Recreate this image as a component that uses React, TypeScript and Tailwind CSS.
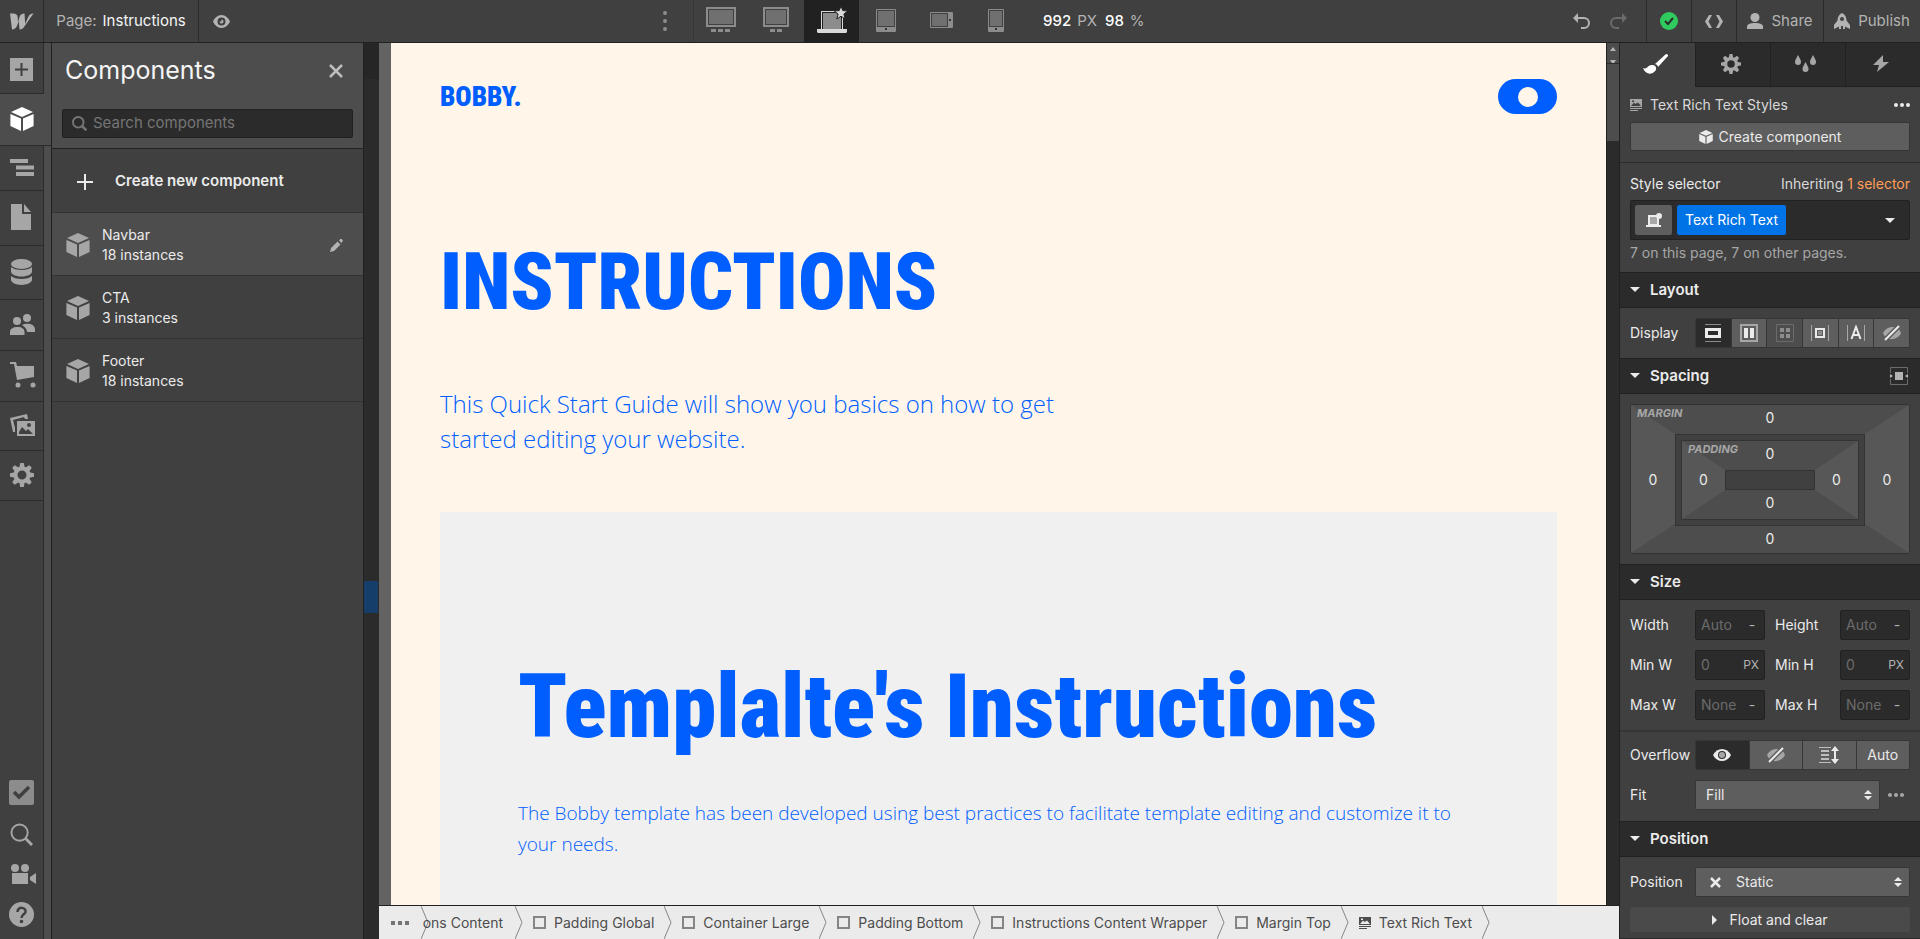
import type { ReactNode } from 'react'
import clsx from 'clsx'

// ── Shared styles ─────────────────────────────────────────────

const displayFont = "font-['Roboto_Condensed','Liberation_Sans_Narrow',sans-serif] font-black"
const bodyFont = "font-['Open_Sans','Noto_Sans',sans-serif] font-[350]"
const labelCls = 'w-[65px] shrink-0 text-[#ebebeb]'
const segmentCls = 'flex flex-1 items-center justify-center border-l border-[#363636] first:border-l-0'

// ── Icons ─────────────────────────────────────────────────────

function Svg({ w, h, box, children, className }: { w: number; h: number; box?: string; children: ReactNode; className?: string }) {
  return (
    <svg width={w} height={h} viewBox={box ?? `0 0 ${w} ${h}`} fill="currentColor" className={clsx('shrink-0', className)} aria-hidden="true">
      {children}
    </svg>
  )
}

function Cube({ size = 24, className }: { size?: number; className?: string }) {
  return (
    <Svg w={size} h={size} box="0 0 24 24" className={className}>
      <path d="M12 0 23 5 12 10 1 5ZM.4 7 11 11.6V24L.4 19ZM23.6 7 13 11.6V24l10.6-5Z" />
    </Svg>
  )
}

function Search({ size, stroke = 2 }: { size: number; stroke?: number }) {
  return (
    <Svg w={size} h={size} box="0 0 24 24">
      <circle cx="10" cy="10" r="8.5" fill="none" stroke="currentColor" strokeWidth={stroke} />
      <path d="m16 16 7 7" stroke="currentColor" strokeWidth={stroke + 1} />
    </Svg>
  )
}

function Gear({ size }: { size: number }) {
  return (
    <Svg w={size} h={size} box="0 0 24 24">
      <circle cx="12" cy="12" r="6.5" fill="none" stroke="currentColor" strokeWidth="4" />
      {[0, 45, 90, 135, 180, 225, 270, 315].map(a => (
        <path key={a} d="m10.2 0h3.6l1 5h-5.6z" transform={`rotate(${a} 12 12)`} />
      ))}
    </Svg>
  )
}

const Plus = () => (
  <Svg w={16} h={16}><path d="M7 0h2v7h7v2H9v7H7V9H0V7h7z" /></Svg>
)

const Caret = () => (
  <Svg w={10} h={5}><path d="M0 0h10L5 5z" /></Svg>
)

const UpDown = () => (
  <Svg w={8} h={10}><path d="M4 0l4 4H0zM4 10 0 6h8z" /></Svg>
)

const Dots = () => (
  <Svg w={16} h={4}><circle cx="2" cy="2" r="2" /><circle cx="8" cy="2" r="2" /><circle cx="14" cy="2" r="2" /></Svg>
)

const EyeOff = () => (
  <Svg w={18} h={16} className="text-[#a6a6a6]">
    <path d="M0 8c3-7 13-8 16.5-3L18 8c-3 7-13 8-16.5 3z" />
    <path d="m2 15 14-14" stroke="#5e5e5e" strokeWidth="5" />
    <path d="m2 15 14-14" stroke="#ebebeb" strokeWidth="2" />
  </Svg>
)

const RichText = () => (
  <Svg w={12} h={12}>
    <path fillRule="evenodd" d="M0 0h12v8H0zm1 7h10L8 3.500 5.500 5 4 3.500zM2 1.500v1.500h2V1.500z" />
    <path d="M0 9h12v1H0zM0 11h8v1H0z" />
  </Svg>
)

const Chevron = () => (
  <Svg w={8} h={33}><path d="M0 0l7 16.500L0 33" fill="none" stroke="#858585" /></Svg>
)

// ── Top bar ───────────────────────────────────────────────────

const breakpoints = [
  { name: 'Extra large', width: 'w-[54px]', icon: (
    <Svg w={30} h={26}><path d="M0 0h30v20H0z" /><path d="M2 2h26v16H2z" fill="#404040" /><path d="M3 3h24v14H3z" fill="#707070" /><path d="M5 22h5v3H5zM12 22h5v3h-5zM19 22h5v3h-5z" /></Svg>
  ) },
  { name: 'Large', width: 'w-[56px]', icon: (
    <Svg w={26} h={26}><path d="M0 0h26v20H0z" /><path d="M2 2h22v16H2z" fill="#404040" /><path d="M3 3h20v14H3z" fill="#707070" /><path d="M7 22h5v3H7zM14 22h5v3h-5z" /></Svg>
  ) },
  { name: 'Desktop', width: 'w-[55px]', active: true, icon: (
    <Svg w={30} h={28}>
      <path d="M4 5h22v20H4z" /><path d="M5 6h20v18H5z" fill="#212121" /><path d="M6 7h18v16H6z" fill="#8c8c8c" /><path d="M0 23h30v3l-1 1H1l-1-1z" />
      <path d="m24 0 1.800 4.600 5 .3-3.900 3.100L28.200 13 24 10.200 19.800 13l1.300-5-3.900-3.100 5-.3z" stroke="#212121" />
    </Svg>
  ) },
  { name: 'Tablet', width: 'w-[54px]', icon: (
    <Svg w={20} h={23}><rect width="20" height="23" rx="1" /><path d="M1 1h18v17H1z" fill="#404040" /><path d="M2 2h16v15H2z" fill="#707070" /><path d="M9 19h2v2H9z" fill="#333" /></Svg>
  ) },
  { name: 'Mobile landscape', width: 'w-[56px]', icon: (
    <Svg w={23} h={16}><rect width="23" height="16" rx="1" /><path d="M1 1h17v14H1z" fill="#404040" /><path d="M2 2h15v12H2z" fill="#707070" /><path d="M19 7h2v2h-2z" fill="#333" /></Svg>
  ) },
  { name: 'Mobile portrait', width: 'w-[54px]', icon: (
    <Svg w={16} h={23}><rect width="16" height="23" rx="1" /><path d="M1 1h14v17H1z" fill="#404040" /><path d="M2 2h12v15H2z" fill="#707070" /><path d="M7 19h2v2H7z" fill="#333" /></Svg>
  ) },
]

function TopBar() {
  const cell = 'flex h-full items-center justify-center border-l border-[#2b2b2b]'
  return (
    <header className="flex h-[43px] shrink-0 items-center border-b border-[#212121] bg-[#404040] text-[#b3b3b3]">
      <button aria-label="Webflow menu" className="flex h-full w-[43px] items-center justify-center">
        <Svg w={24} h={17}>
          <path d="M18 4.500 15.200 10.800 14.500.5C11.500.5 10.300 2 9.500 4L8 9.500 7.700 4C7.500 1.800 5.800.5 3.500.5H0L2 16.500c2.800 0 4.300-1.900 5-3.800L8.800 8.500 9.500 16.500c2.800 0 4.200-1.500 5-3.300L23.500.5C20.500.5 19 2 18 4.500z" />
        </Svg>
      </button>
      <div className={clsx(cell, 'w-[155px] gap-1.5 text-[15px]')}>
        <span>Page:</span>
        <span className="text-[#f5f5f5]">Instructions</span>
      </div>
      <button aria-label="Preview" className={clsx(cell, 'w-[45px]')}>
        <Svg w={17} h={13}>
          <path fillRule="evenodd" d="M8.500 0C4.500 0 1.500 3 0 6.500 1.500 10 4.500 13 8.500 13S15.500 10 17 6.500C15.500 3 12.500 0 8.500 0zm0 2.500a4 4 0 1 0 0 8 4 4 0 0 0 0-8zm0 2a2 2 0 1 1-2 2l2 0z" />
        </Svg>
      </button>
      <div className="flex h-full flex-1 items-center pl-[394px]">
        <button aria-label="More breakpoints" className="flex h-full w-[56px] items-center justify-center text-[#8c8c8c]">
          <Svg w={4} h={20}><circle cx="2" cy="2" r="2" /><circle cx="2" cy="10" r="2" /><circle cx="2" cy="18" r="2" /></Svg>
        </button>
        <div className="flex h-full border-l border-[#363636]">
          {breakpoints.map(b => (
            <button key={b.name} aria-label={b.name} className={clsx('flex items-center justify-center pb-0.5', b.width, b.active ? 'bg-[#212121] text-[#d9d9d9]' : 'text-[#8c8c8c]')}>
              {b.icon}
            </button>
          ))}
        </div>
        <div className="flex gap-1.5 pl-5 text-[15px]">
          <span className="font-medium text-white">992</span>
          <span>PX</span>
          <span className="pl-0.5 font-medium text-white">98</span>
          <span>%</span>
        </div>
      </div>
      <button aria-label="Undo" className="flex h-full w-9 items-center justify-center">
        <Svg w={18} h={16}><path d="M3 5h8a5 5 0 0 1 0 10H8" fill="none" stroke="currentColor" strokeWidth="2" /><path d="M0 5 5 0v10z" /></Svg>
      </button>
      <button aria-label="Redo" className="mr-2.5 flex h-full w-9 items-center justify-center text-[#6b6b6b]">
        <Svg w={18} h={16}><path d="M15 5H7a5 5 0 0 0 0 10h3" fill="none" stroke="currentColor" strokeWidth="2" /><path d="m18 5-5-5v10z" /></Svg>
      </button>
      <button aria-label="Saved" className={clsx(cell, 'w-[45px] text-[#2fcb5e]')}>
        <Svg w={18} h={18}><circle cx="9" cy="9" r="9" /><path d="m5 9 3 3 5-6" fill="none" stroke="#2b2b2b" strokeWidth="2" /></Svg>
      </button>
      <button aria-label="Export code" className={clsx(cell, 'w-[45px]')}>
        <Svg w={18} h={13}><path d="M7 0 3.500 6.500 7 13H4L0 6.500 4 0zM11 0l3.500 6.500L11 13h3L18 6.500 14 0z" /></Svg>
      </button>
      <button className={clsx(cell, 'w-[87px] gap-2 text-[15px]')}>
        <Svg w={16} h={16}><circle cx="8" cy="4.500" r="4.500" /><path d="M0 16v-2c0-3 3-4 8-4s8 1 8 4v2z" /></Svg>
        Share
      </button>
      <button className={clsx(cell, 'w-[97px] gap-2 text-[15px]')}>
        <Svg w={16} h={16}>
          <path fillRule="evenodd" d="M8 0c3 1.500 4.500 4 4.500 7.500L16 12v4l-5-2.500V16H9v-3H7v3H5v-2.500L0 16v-4l3.500-4.500C3.500 4 5 1.500 8 0zm0 4a2 2 0 1 0 0 4 2 2 0 0 0 0-4z" />
        </Svg>
        Publish
      </button>
    </header>
  )
}

// ── Left rail ─────────────────────────────────────────────────

const railItems = [
  { name: 'Add', height: 'h-[51px]', icon: <Svg w={23} h={23}><path fillRule="evenodd" d="M0 0h23v23H0zm10.500 5v5.500H5v2h5.500V18h2v-5.500H18v-2h-5.500V5z" /></Svg> },
  { name: 'Components', height: 'h-[52px]', active: true, icon: <Cube /> },
  { name: 'Navigator', height: 'h-[45px]', icon: <Svg w={24} h={17}><path d="M0 0h18v4H0zM6 6.500h18v4H6zM6 13h18v4H6z" /></Svg> },
  { name: 'Pages', height: 'h-[55px]', icon: <Svg w={22} h={26}><path d="M1 0h11v10h9v16H1z" /><path d="M14 0l7 8h-7z" /></Svg> },
  { name: 'CMS', height: 'h-[54px]', icon: (
    <Svg w={22} h={26}>
      <ellipse cx="11.500" cy="5" rx="10.500" ry="5" />
      <path d="M1 8c4 4 17 4 21 0v5c-2 6-19 6-21 0zM1 17c4 4 17 4 21 0v4c-2 6.500-19 6.500-21 0z" />
    </Svg>
  ) },
  { name: 'Users', height: 'h-[51px]', icon: (
    <Svg w={25} h={21}>
      <circle cx="7" cy="7" r="4" /><circle cx="17" cy="4" r="4" />
      <path d="M0 21v-3c0-3 3-5 7.500-5s7 2 7 5v3zM12 11c4-2 13-2 13 5v2h-8c0-3-2-5-5-7z" />
    </Svg>
  ) },
  { name: 'Ecommerce', height: 'h-[51px]', icon: (
    <Svg w={26} h={26}><path d="M0 0h6l1 4h17v11L7 18 4 2H0z" /><circle cx="8" cy="23" r="2.500" /><circle cx="23" cy="23" r="2.500" /></Svg>
  ) },
  { name: 'Assets', height: 'h-[49px]', icon: (
    <Svg w={26} h={23}>
      <path d="M0 4 17 0l1 5h-3l-1-2L3 6l2 8v4H3z" />
      <path fillRule="evenodd" d="M7 7h18v15H7zm2 11v2h14l-5-5-2 2-4-4zm10-9a2 2 0 1 0 0 4 2 2 0 0 0 0-4z" />
    </Svg>
  ) },
  { name: 'Settings', height: 'h-[50px]', icon: <Gear size={24} /> },
]

function Rail() {
  return (
    <nav className="flex w-[51px] shrink-0 flex-col justify-between bg-[linear-gradient(to_right,#404040_43px,#2b2b2b_43px,#2b2b2b_44px,#4d4d4d_44px)] text-[#a6a6a6]">
      <div className="flex flex-col">
        {railItems.map(i => (
          <button
            key={i.name}
            aria-label={i.name}
            className={clsx('flex items-center border-b border-[#2b2b2b] pb-0.5 pl-2.5 first:pt-1', i.height, i.active ? 'w-full bg-[#4d4d4d] text-white' : 'w-[43px]')}
          >
            {i.icon}
          </button>
        ))}
      </div>
      <div className="flex w-[43px] flex-col items-center gap-[18px] pb-3">
        <button aria-label="Audit">
          <Svg w={25} h={25}><rect width="25" height="25" rx="2" fill="#8c8c8c" /><path d="m5 12 5 5 10-10" fill="none" stroke="#404040" strokeWidth="3.500" /></Svg>
        </button>
        <button aria-label="Quick find"><Search size={23} /></button>
        <button aria-label="Video tutorials" className="pl-1">
          <Svg w={25} h={20}><circle cx="4" cy="4" r="4" /><circle cx="14" cy="4" r="4" /><path d="M1 9h16v11H1zM19 13l6-4v11l-6-4z" /></Svg>
        </button>
        <button aria-label="Help">
          <Svg w={25} h={25}>
            <circle cx="12.500" cy="12.500" r="12.500" />
            <path d="M8.500 10c0-6 9-5 8 0-.5 2.500-4 2.500-4 6" fill="none" stroke="#404040" strokeWidth="2.500" /><circle cx="12.500" cy="19.500" r="1.800" fill="#404040" />
          </Svg>
        </button>
      </div>
    </nav>
  )
}

// ── Components panel ──────────────────────────────────────────

const components = [
  { name: 'Navbar', count: '18 instances', hovered: true },
  { name: 'CTA', count: '3 instances' },
  { name: 'Footer', count: '18 instances' },
]

function ComponentsPanel() {
  return (
    <aside className="flex w-[313px] shrink-0 flex-col border-x border-[#212121] bg-[#404040] text-[#ebebeb]">
      <div className="border-b border-[#212121] bg-[#4d4d4d] px-2.5 pb-2.5">
        <div className="flex h-[66px] items-start justify-between pt-[11px]">
          <h2 className="pl-[3px] text-[25px] leading-8 text-[#f5f5f5]">Components</h2>
          <button aria-label="Close" className="p-2.5 text-[#bdbdbd]">
            <Svg w={14} h={14}><path d="m1 1 12 12M13 1 1 13" stroke="currentColor" strokeWidth="2.500" /></Svg>
          </button>
        </div>
        <label className="flex h-[29px] items-center gap-1.5 rounded-xs border border-[#212121] bg-[#2b2b2b] px-[9px] text-[#757575]">
          <Search size={15} stroke={3} />
          <input type="text" aria-label="Search components" placeholder="Search components" className="w-full text-[15px] outline-none placeholder:text-[#757575]" />
        </label>
      </div>
      <button className="flex h-16 items-center gap-[22px] border-b border-[#333] pt-0.5 pl-[25px] text-[15px] font-semibold">
        <Plus />
        Create new component
      </button>
      <ul>
        {components.map(c => (
          <li key={c.name} className={clsx('flex h-[63px] items-center border-b border-[#333] pt-0.5 pr-5 pl-3.5', c.hovered && 'bg-[#4d4d4d]')}>
            <Cube className="text-[#a6a6a6]" />
            <div className="flex-1 pl-3 text-sm leading-5">
              <div>{c.name}</div>
              <div>{c.count}</div>
            </div>
            {c.hovered && (
              <button aria-label="Edit component" className="text-[#b3b3b3]">
                <Svg w={13} h={13}><path d="M0 13l1-4 6.500-6.500 3 3L4 12zM9 1.500l1-1a1 1 0 0 1 2 0l1 1-1.500 2.500z" /></Svg>
              </button>
            )}
          </li>
        ))}
      </ul>
    </aside>
  )
}

// ── Canvas ────────────────────────────────────────────────────

const crumbs = ['Padding Global', 'Container Large', 'Padding Bottom', 'Instructions Content Wrapper', 'Margin Top']

function Canvas() {
  return (
    <main className="flex min-w-0 flex-1 flex-col">
      <div className="flex min-h-0 flex-1">
        <div className="w-3 shrink-0 bg-[#636363]" />
        <div className="flex-1 overflow-hidden bg-[#fff6e9] px-[49px] text-[#005eff]">
          <div className="flex h-[107px] items-center justify-between">
            <a href="#" className={clsx(displayFont, 'text-[27px] leading-10')}>BOBBY.</a>
            <button aria-label="Toggle menu" className="flex h-[35px] w-[59px] items-center justify-center rounded-full bg-[#005eff]">
              <span className="size-5 rounded-full bg-[#fff6e9]" />
            </button>
          </div>
          <h1 className={clsx(displayFont, 'pt-[82px] text-[79px] leading-[100px]')}>INSTRUCTIONS</h1>
          <p className={clsx(bodyFont, 'w-[640px] pt-[54px] text-[24px] leading-[35px]')}>
            This Quick Start Guide will show you basics on how to get started editing your website.
          </p>
          <section className="mt-14 h-[500px] bg-[#f0f0f0] px-[78px] pt-[140px]">
            <h2 className={clsx(displayFont, 'text-[89px] leading-[110px] whitespace-nowrap')}>Templalte's Instructions</h2>
            <p className={clsx(bodyFont, 'pt-[36px] text-[19px] leading-[31px]')}>
              The Bobby template has been developed using best practices to facilitate template editing and customize it to your needs.
            </p>
          </section>
        </div>
        <div className="flex w-[13px] shrink-0 flex-col border-l border-[#212121] bg-[#2b2b2b]">
          <div className="flex h-5 flex-col items-center justify-between bg-[#4d4d4d] pt-1 text-[#b3b3b3]">
            <Svg w={6} h={4}><path d="M3 0l3 4H0z" /></Svg>
            <Svg w={6} h={3}><path d="M0 0h6L4 3H2z" /></Svg>
          </div>
          <div className="mt-px h-[77px] bg-[#4d4d4d]" />
        </div>
      </div>
      <nav aria-label="Breadcrumbs" className="flex h-[34px] shrink-0 items-center border-t border-[#212121] bg-[#ebebeb] text-sm whitespace-nowrap text-[#4d4d4d]">
        <button aria-label="More ancestors" className="w-[42px] pl-3">
          <Svg w={19} h={4}><path d="M0 0h4v4H0zM7 0h4v4H7zM14 0h4v4h-4z" fill="#757575" /></Svg>
        </button>
        <Chevron />
        <button className="flex w-[86px] justify-end pr-3">ons Content</button>
        <Chevron />
        {crumbs.map(c => (
          <span key={c} className="flex items-center">
            <button className="flex items-center gap-2 px-2.5">
              <span className="size-[13px] border-2 border-[#858585]" />
              {c}
            </button>
            <Chevron />
          </span>
        ))}
        <button className="flex items-center gap-2 px-2.5"><RichText />Text Rich Text</button>
        <Chevron />
      </nav>
    </main>
  )
}

// ── Style panel ───────────────────────────────────────────────

function SectionHead({ title, children }: { title: string; children?: ReactNode }) {
  return (
    <div className="flex h-9 shrink-0 items-center justify-between border-y border-[#212121] bg-[#2b2b2b] pr-3 pl-2.5 text-[#ebebeb]">
      <button className="flex items-center gap-2.5 text-[15px] font-semibold"><Caret />{title}</button>
      {children}
    </div>
  )
}

function SizeField({ id, label, placeholder, unit }: { id: string; label: string; placeholder: string; unit: string }) {
  return (
    <div className="flex flex-1 items-center">
      <label htmlFor={id} className={labelCls}>{label}</label>
      <div className="flex h-[30px] min-w-0 flex-1 items-center rounded-xs border border-[#212121] bg-[#2b2b2b] px-[5px]">
        <input id={id} type="text" placeholder={placeholder} className="w-full min-w-0 outline-none placeholder:text-[#6b6b6b]" />
        <button className={clsx('text-[#b3b3b3]', unit === 'PX' ? 'text-xs' : 'w-3.5 shrink-0')}>{unit}</button>
      </div>
    </div>
  )
}

const displayOptions = [
  { name: 'Block', active: true, icon: <Svg w={16} h={18}><path d="M0 0h16v1H0zM0 17h16v1H0z" fill="#8c8c8c" /><path d="M1.500 5.500h13v7h-13z" fill="none" stroke="currentColor" strokeWidth="3" /></Svg> },
  { name: 'Flex', icon: <Svg w={18} h={18}><path d="M1 1h16v16H1z" fill="none" stroke="#a6a6a6" strokeWidth="2" /><path d="M4 4h4v10H4zM10 4h4v10h-4z" /></Svg> },
  { name: 'Grid', dim: true, icon: <Svg w={18} h={18}><path d="M.5.5h17v17H.5z" fill="none" stroke="#6b6b6b" /><path d="M4 4h4v4H4zM10 4h4v4h-4zM4 10h4v4H4zM10 10h4v4h-4z" fill="#8c8c8c" /></Svg> },
  { name: 'Inline block', icon: <Svg w={18} h={16}><path d="M0 0h1v16H0zM17 0h1v16h-1z" fill="#a6a6a6" /><path d="M5 4h8v8H5z" fill="none" stroke="currentColor" strokeWidth="2" /><path d="M7 6h4v4H7z" fill="#8c8c8c" /></Svg> },
  { name: 'Inline', icon: <Svg w={18} h={16}><path d="M0 0h1v16H0zM17 0h1v16h-1z" fill="#a6a6a6" /><path d="M4.500 14 9 2l4.500 12M6 10h6" fill="none" stroke="currentColor" strokeWidth="2" /></Svg> },
  { name: 'None', icon: <EyeOff /> },
]

function SpacingBox() {
  const value = 'relative flex items-center justify-center pb-1 hover:text-white'
  const side = 'relative row-start-2 flex items-center justify-center hover:text-white'
  const caption = 'absolute top-0.5 left-1.5 text-[11px] leading-3 font-bold text-[#a6a6a6] italic'
  return (
    <div className="relative grid h-[150px] grid-cols-[44px_1fr_44px] grid-rows-[29px_1fr_29px] rounded-xs border border-[#333] text-[#ebebeb]">
      <div className="absolute inset-0 border-x-[44px] border-y-[29px] border-x-[#575757] border-y-[#4d4d4d]" />
      <span className={caption}>MARGIN</span>
      <button className={clsx(value, 'col-start-2')}>0</button>
      <button className={clsx(side, 'col-start-1')}>0</button>
      <div className="relative col-start-2 row-start-2 border border-[#333] bg-[#404040] p-[5px]">
        <div className="relative grid h-full grid-cols-[43px_1fr_43px] grid-rows-[29px_1fr_29px] border border-[#333]">
          <div className="absolute inset-0 border-x-[43px] border-y-[29px] border-x-[#575757] border-y-[#4d4d4d]" />
          <span className={caption}>PADDING</span>
          <button className={clsx(value, 'col-start-2')}>0</button>
          <button className={clsx(side, 'col-start-1')}>0</button>
          <div className="relative col-start-2 row-start-2 rounded-xs border border-[#333] bg-[#404040]" />
          <button className={clsx(side, 'col-start-3')}>0</button>
          <button className={clsx(value, 'col-start-2 row-start-3')}>0</button>
        </div>
      </div>
      <button className={clsx(side, 'col-start-3')}>0</button>
      <button className={clsx(value, 'col-start-2 row-start-3')}>0</button>
    </div>
  )
}

const panelTabs = [
  { name: 'Style', active: true, icon: (
    <Svg w={26} h={20}><path d="M0 14c4 2 5-4 10-3 4 1 4 5 1 7-3 3-9 2-11-4z" /><path d="M12 10 23 0c2 0 2 1 2 2L15 13c0-1-1-2.500-3-3z" /></Svg>
  ) },
  { name: 'Settings', icon: <Gear size={20} /> },
  { name: 'Style manager', icon: (
    <Svg w={22} h={17}><path d="M3 0c2 4 3 5 3 7a3 3 0 0 1-6 0c0-2 1-3 3-7zM18 0c2 4 3 5 3 7a3 3 0 0 1-6 0c0-2 1-3 3-7zM10.500 7c2 4 3 5 3 7a3 3 0 0 1-6 0c0-2 1-3 3-7z" /></Svg>
  ) },
  { name: 'Interactions', icon: <Svg w={16} h={17}><path d="M10 0 0 10h6l-2 7L16 7h-6z" /></Svg> },
]

function StylePanel() {
  return (
    <aside className="flex w-[301px] shrink-0 flex-col overflow-hidden border-l border-[#212121] bg-[#404040] text-sm text-[#ebebeb]">
      <div className="grid h-11 shrink-0 grid-cols-4">
        {panelTabs.map(t => (
          <button key={t.name} aria-label={t.name} className={clsx('flex items-center justify-center pr-1 pb-0.5', t.active ? 'text-white' : 'border-b border-l border-[#212121] bg-[#2b2b2b] text-[#a6a6a6]')}>
            {t.icon}
          </button>
        ))}
      </div>

      {/* Selected element */}
      <div className="border-b border-[#2b2b2b] px-2.5 pb-[11px]">
        <div className="flex h-[35px] items-center gap-2">
          <span className="text-[#a6a6a6]"><RichText /></span>
          <span className="flex-1 text-[#d9d9d9]">Text Rich Text Styles</span>
          <button aria-label="Element options"><Dots /></button>
        </div>
        <button className="flex h-[29px] w-full items-center justify-center gap-1.5 rounded-xs border border-[#363636] bg-[#5e5e5e]">
          <Cube size={14} />
          Create component
        </button>
      </div>

      {/* Style selector */}
      <div className="px-2.5 pt-2 pb-2.5">
        <div className="mb-1 flex h-[25px] items-center justify-between">
          <span>Style selector</span>
          <span className="text-[#d9d9d9]">Inheriting <a href="#" className="text-[#ff9e59]">1 selector</a></span>
        </div>
        <div className="flex h-10 items-center gap-[5px] rounded-xs border border-[#212121] bg-[#2b2b2b] px-1">
          <button aria-label="Breakpoint" className="flex h-[30px] w-[37px] items-center justify-center rounded-xs bg-[#5e5e5e]">
            <Svg w={16} h={15}><path d="M3 3h9v9H3z" fill="#a6a6a6" stroke="currentColor" strokeWidth="2" /><path d="M0 12h15v2H0z" /><circle cx="13" cy="3" r="3" /></Svg>
          </button>
          <button className="h-[30px] rounded-xs bg-[#0073e6] px-2 text-white">Text Rich Text</button>
          <button aria-label="Choose selector" className="mr-2.5 ml-auto"><Caret /></button>
        </div>
        <p className="pt-1 leading-[18px] text-[#a6a6a6]">7 on this page, 7 on other pages.</p>
      </div>

      <SectionHead title="Layout" />
      <div className="flex h-[50px] shrink-0 items-center px-2.5">
        <span className={labelCls}>Display</span>
        <div className="flex h-[30px] flex-1 overflow-hidden rounded-xs border border-[#363636]">
          {displayOptions.map(o => (
            <button key={o.name} aria-label={o.name} className={clsx(segmentCls, o.active ? 'bg-[#2b2b2b]' : o.dim ? 'bg-[#4d4d4d]' : 'bg-[#5e5e5e]')}>
              {o.icon}
            </button>
          ))}
        </div>
      </div>

      <SectionHead title="Spacing">
        <button aria-label="Center element">
          <Svg w={18} h={18}><path d="M.5 6V.5h17V6M.5 12v5.500h17V12" fill="none" stroke="#6b6b6b" /><path d="M5 5h8v8H5zM0 7l3 2-3 2zM18 7l-3 2 3 2z" fill="#b3b3b3" /></Svg>
        </button>
      </SectionHead>
      <div className="px-2.5 py-2.5"><SpacingBox /></div>

      <SectionHead title="Size" />
      <div className="flex flex-col gap-2.5 border-b-2 border-[#363636] p-2.5">
        <div className="flex gap-2.5">
          <SizeField id="width" label="Width" placeholder="Auto" unit="-" />
          <SizeField id="height" label="Height" placeholder="Auto" unit="-" />
        </div>
        <div className="flex gap-2.5">
          <SizeField id="min-w" label="Min W" placeholder="0" unit="PX" />
          <SizeField id="min-h" label="Min H" placeholder="0" unit="PX" />
        </div>
        <div className="flex gap-2.5">
          <SizeField id="max-w" label="Max W" placeholder="None" unit="-" />
          <SizeField id="max-h" label="Max H" placeholder="None" unit="-" />
        </div>
      </div>
      <div className="flex flex-col gap-2.5 px-2.5 pt-2 pb-[11px]">
        <div className="flex items-center">
          <span className={labelCls}>Overflow</span>
          <div className="flex h-[30px] flex-1 overflow-hidden rounded-xs border border-[#363636]">
            <button aria-label="Visible" className={clsx(segmentCls, 'bg-[#2b2b2b]')}>
              <Svg w={18} h={12}><path d="M0 6c4-8 14-8 18 0-4 8-14 8-18 0z" /><circle cx="9" cy="6" r="4" fill="#2b2b2b" /><circle cx="9" cy="6" r="3" fill="#a6a6a6" /></Svg>
            </button>
            <button aria-label="Hidden" className={clsx(segmentCls, 'bg-[#5e5e5e]')}><EyeOff /></button>
            <button aria-label="Scroll" className={clsx(segmentCls, 'bg-[#5e5e5e]')}>
              <Svg w={20} h={18}><path d="M0 1h12v1H0zM2 4h8v2H2zM2 8h8v2H2zM2 12h8v2H2zM0 16h12v1H0z" fill="#bdbdbd" /><path d="M16 0l4 5h-3v8h3l-4 5-4-5h3V5h-3z" /></Svg>
            </button>
            <button className={clsx(segmentCls, 'bg-[#5e5e5e]')}>Auto</button>
          </div>
        </div>
        <div className="flex items-center">
          <label htmlFor="fit" className={labelCls}>Fit</label>
          <div className="relative flex-1">
            <select id="fit" className="h-[30px] w-full appearance-none rounded-xs border border-[#363636] bg-[#5e5e5e] px-2.5 outline-none">
              <option>Fill</option>
            </select>
            <span className="pointer-events-none absolute inset-y-0 right-2 flex items-center"><UpDown /></span>
          </div>
          <button aria-label="Fit options" className="pr-1.5 pl-2 text-[#a6a6a6]"><Dots /></button>
        </div>
      </div>

      <SectionHead title="Position" />
      <div className="flex flex-col gap-2.5 border-b border-[#2b2b2b] px-2.5 pt-2.5 pb-1.5">
        <div className="flex items-center">
          <label htmlFor="position" className={labelCls}>Position</label>
          <div className="relative flex-1">
            <select id="position" className="h-[30px] w-full appearance-none rounded-xs border border-[#363636] bg-[#5e5e5e] pr-5 pl-10 outline-none">
              <option>Static</option>
            </select>
            <span className="pointer-events-none absolute inset-y-0 left-[15px] flex items-center">
              <Svg w={11} h={11}><path d="m1 1 9 9m0-9-9 9" stroke="currentColor" strokeWidth="2.500" /></Svg>
            </span>
            <span className="pointer-events-none absolute inset-y-0 right-2 flex items-center"><UpDown /></span>
          </div>
        </div>
        <button className="flex h-[25px] items-center justify-center gap-3 rounded-xs bg-[#4a4a4a]">
          <Svg w={5} h={10}><path d="M0 0l5 5-5 5z" /></Svg>
          Float and clear
        </button>
      </div>
    </aside>
  )
}

export default function App() {
  return (
    <div className="flex h-screen flex-col overflow-hidden bg-[#2b2b2b] font-[Inter,sans-serif]">
      <TopBar />
      <div className="flex min-h-0 flex-1">
        <Rail />
        <ComponentsPanel />
        {/* sliver of the panel that lies under the open one */}
        <div className="w-[15px] shrink-0 bg-[#2b2b2b]">
          <div className="h-9 bg-[#262626]" />
          <div className="mt-[502px] h-8 w-3.5 bg-[#153e6b]" />
        </div>
        <Canvas />
        <StylePanel />
      </div>
    </div>
  )
}
